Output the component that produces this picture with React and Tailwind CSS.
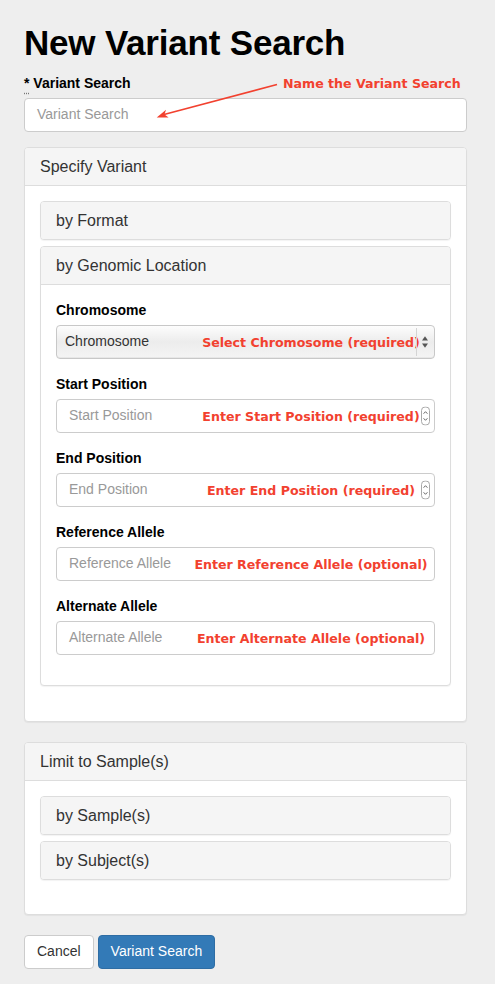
import React from "react";

const font = "font-['Liberation_Sans','Helvetica',Arial,sans-serif]";
const noteFont = "font-['DejaVu_Sans',Verdana,sans-serif]";

function Note({ children }) {
  return (
    <span
      className={`pointer-events-none absolute left-[254px] top-[calc(50%+1px)] -translate-x-1/2 -translate-y-1/2 whitespace-nowrap text-[12.6px] font-bold text-[#f2412f] ${noteFont}`}
    >
      {children}
    </span>
  );
}

function Spinner() {
  return (
    <svg viewBox="0 0 9 19" className="absolute right-[4px] top-1/2 h-[19px] w-[9px] -translate-y-1/2">
      <rect x="0.5" y="0.5" width="8" height="18" rx="3.5" fill="#fff" stroke="#a9a9a9" />
      <path d="M2.6 7.2 L4.5 5.2 L6.4 7.2" fill="none" stroke="#555" strokeWidth="0.9" />
      <path d="M2.6 11.8 L4.5 13.8 L6.4 11.8" fill="none" stroke="#555" strokeWidth="0.9" />
    </svg>
  );
}

function Field({ label, placeholder, note, number }) {
  return (
    <div className="mb-[15px]">
      <div className="mb-[5px] text-[14px] font-bold leading-[20px] text-black">{label}</div>
      <div className="relative flex h-[34px] items-center rounded-[4px] border border-[#ccc] bg-white px-[12px] text-[14px] text-[#999]">
        {placeholder}
        <Note>{note}</Note>
        {number && <Spinner />}
      </div>
    </div>
  );
}

function Heading({ children, open }) {
  return (
    <div
      className={`bg-[#f5f5f5] px-[15px] py-[10px] text-[16px] leading-[17px] text-[#333] ${
        open ? "rounded-t-[3px] border-b border-[#ddd]" : "rounded-[3px]"
      }`}
    >
      {children}
    </div>
  );
}

function SubPanel({ title, children }) {
  return (
    <div className="rounded-[4px] border border-[#ddd] bg-white shadow-[0_1px_1px_rgba(0,0,0,0.05)]">
      <Heading open={!!children}>{title}</Heading>
      {children}
    </div>
  );
}

function Panel({ title, children }) {
  return (
    <div className="mb-[20px] rounded-[4px] border border-[#ddd] bg-white shadow-[0_1px_1px_rgba(0,0,0,0.05)]">
      <Heading open>{title}</Heading>
      <div className="p-[15px]">{children}</div>
    </div>
  );
}

export default function App() {
  return (
    <div className={`min-h-[984px] bg-[#eeeeee] pl-[24px] pr-[28px] pt-[23px] ${font}`}>
      <h1 className="mb-[10px] text-[35px] font-bold leading-[39.6px] tracking-[-0.2px] text-black">
        New Variant Search
      </h1>

      <div className="relative mb-[15px]">
        <div className="mb-[5px] text-[14px] font-bold leading-[20px] text-black">
          <span className="underline decoration-dotted decoration-[#777] underline-offset-[5px]">*</span> Variant
          Search
        </div>
        <div className="flex h-[34px] items-center rounded-[4px] border border-[#ccc] bg-white px-[12px] text-[14px] text-[#999]">
          Variant Search
        </div>
        <span
          className={`absolute left-[259px] top-[2px] whitespace-nowrap text-[12.6px] font-bold text-[#f2412f] ${noteFont}`}
        >
          Name the Variant Search
        </span>
        <svg className="pointer-events-none absolute left-0 top-0 h-[60px] w-[300px]" viewBox="0 0 300 60">
          <line x1="253" y1="11.5" x2="140" y2="41.5" stroke="#f2412f" strokeWidth="1.6" />
          <path d="M132.7 44.5 L142 36.8 L140.5 41.6 L144.6 44.6 Z" fill="#f2412f" />
        </svg>
      </div>

      <Panel title="Specify Variant">
        <div className="mb-[20px] flex flex-col gap-[6px]">
          <SubPanel title="by Format" />
          <SubPanel title="by Genomic Location">
            <div className="p-[15px]">
              <div className="mb-[15px]">
                <div className="mb-[5px] text-[14px] font-bold leading-[20px] text-black">Chromosome</div>
                <div className="relative flex h-[34px] items-center rounded-[4px] border border-[#c8c8c8] bg-gradient-to-b from-[#fdfdfd] via-[#ececec] to-[#f4f4f4] px-[8px] text-[14px] text-[#333] shadow-[inset_0_-1px_0_rgba(0,0,0,0.05)]">
                  Chromosome
                  <Note>Select Chromosome (required)</Note>
                  <div className="absolute bottom-[2px] right-[17px] top-[2px] w-px bg-[#d4d4d4]" />
                  <svg viewBox="0 0 8 14" className="absolute right-[5px] top-1/2 h-[14px] w-[8px] -translate-y-1/2">
                    <path d="M1 5.6 L4 1.2 L7 5.6 Z" fill="#555" />
                    <path d="M1 8.4 L4 12.8 L7 8.4 Z" fill="#555" />
                  </svg>
                </div>
              </div>
              <Field label="Start Position" placeholder="Start Position" note="Enter Start Position (required)" number />
              <Field label="End Position" placeholder="End Position" note="Enter End Position (required)" number />
              <Field
                label="Reference Allele"
                placeholder="Reference Allele"
                note="Enter Reference Allele (optional)"
              />
              <Field
                label="Alternate Allele"
                placeholder="Alternate Allele"
                note="Enter Alternate Allele (optional)"
              />
            </div>
          </SubPanel>
        </div>
      </Panel>

      <Panel title="Limit to Sample(s)">
        <div className="mb-[19px] flex flex-col gap-[6px]">
          <SubPanel title="by Sample(s)" />
          <SubPanel title="by Subject(s)" />
        </div>
      </Panel>

      <div className="flex gap-[4px]">
        <button className="h-[34px] rounded-[4px] border border-[#ccc] bg-white px-[12px] text-[14px] text-[#333]">
          Cancel
        </button>
        <button className="h-[34px] rounded-[4px] border border-[#2e6da4] bg-[#337ab7] px-[12px] text-[14px] text-white">
          Variant Search
        </button>
      </div>
    </div>
  );
}
